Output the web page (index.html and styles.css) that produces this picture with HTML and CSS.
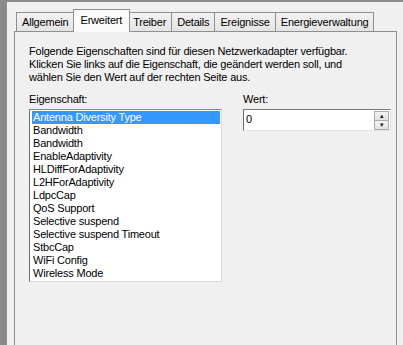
FILE: index.html
```html
<!DOCTYPE html>
<html lang="de">

<head>
    <meta charset="UTF-8">
    <meta name="viewport" content="width=device-width, initial-scale=1.0">
    <title>Eigenschaften</title>
    <link rel="stylesheet" href="styles.css">
</head>

<body>
    <div class="window">
        <div class="frameLeft"></div>
        <div class="sheet">
            <div class="tabs">
                <div class="tab">Allgemein</div>
                <div class="tab active">Erweitert</div>
                <div class="tab">Treiber</div>
                <div class="tab">Details</div>
                <div class="tab">Ereignisse</div>
                <div class="tab">Energieverwaltung</div>
            </div>
            <div class="panel">
                <p class="intro">Folgende Eigenschaften sind für diesen Netzwerkadapter verfügbar.<br>
                    Klicken Sie links auf die Eigenschaft, die geändert werden soll, und<br>
                    wählen Sie den Wert auf der rechten Seite aus.</p>
                <div class="columns">
                    <div class="propCol">
                        <div class="label">Eigenschaft:</div>
                        <ul class="list">
                            <li class="selected">Antenna Diversity Type</li>
                            <li>Bandwidth</li>
                            <li>Bandwidth</li>
                            <li>EnableAdaptivity</li>
                            <li>HLDiffForAdaptivity</li>
                            <li>L2HForAdaptivity</li>
                            <li>LdpcCap</li>
                            <li>QoS Support</li>
                            <li>Selective suspend</li>
                            <li>Selective suspend Timeout</li>
                            <li>StbcCap</li>
                            <li>WiFi Config</li>
                            <li>Wireless Mode</li>
                        </ul>
                    </div>
                    <div class="valueCol">
                        <div class="label">Wert:</div>
                        <div class="spin">
                            <div class="spinValue">0</div>
                            <div class="spinButtons">
                                <div class="spinBtn">&#9652;</div>
                                <div class="spinBtn">&#9662;</div>
                            </div>
                        </div>
                    </div>
                </div>
            </div>
        </div>
    </div>
</body>

</html>
```

FILE: styles.css
```css
body {
    margin: 0;
    font-family: "Liberation Sans", Arial, sans-serif;
    font-size: 11px;
    letter-spacing: -0.2px;
    color: #000;
    background-color: #f0f0f0;
    width: 403px;
    height: 345px;
    overflow: hidden;
}

.window {
    display: flex;
    height: 343px;
    border-top: 2px solid #8c8c8c;
}

.frameLeft {
    width: 7px;
    background: repeating-linear-gradient(90deg, #8e8e8e 0, #8e8e8e 1px, #858585 1px, #858585 2px);
}

.sheet {
    flex: 1;
    display: flex;
    flex-direction: column;
    padding: 7px 6px 0 7px;
}

.tabs {
    display: flex;
    align-items: flex-end;
    padding-left: 2px;
    height: 22px;
    position: relative;
    z-index: 1;
}

.tab {
    height: 18px;
    line-height: 18px;
    padding: 0 5px;
    border: 1px solid #8e8f8f;
    border-bottom: none;
    border-left: none;
    background: linear-gradient(#f2f2f2, #e4e4e4);
    white-space: nowrap;
}

.tab:first-child {
    border-left: 1px solid #8e8f8f;
}

.tab.active {
    height: 22px;
    line-height: 20px;
    margin: 0 -2px -1px -2px;
    padding: 0 7px;
    border-left: 1px solid #8e8f8f;
    background: #fbfbfb;
    position: relative;
    z-index: 2;
}

.panel {
    flex: 1;
    border: 1px solid #8e8f8f;
    border-bottom: none;
    background-color: #f0f0f0;
    padding: 13px 5px 0 14px;
}

.intro {
    margin: 0;
    line-height: 13px;
}

.columns {
    display: flex;
    gap: 21px;
    margin-top: 9px;
}

.label {
    line-height: 13px;
    margin-bottom: 3px;
}

.propCol {
    width: 193px;
}

.list {
    list-style: none;
    margin: 0;
    padding: 1px 1px 1px 2px;
    background: #fff;
    border: 1px solid #dadada;
    border-top-color: #828790;
    border-left-color: #6d6d6d;
}

.list li {
    height: 13px;
    line-height: 13px;
    padding-left: 1px;
}

.list li.selected {
    background-color: #3399ff;
    color: #fff;
}

.valueCol {
    width: 148px;
}

.spin {
    display: flex;
    height: 20px;
    margin-top: 2px;
    background: #fff;
    border: 1px solid #e3e3e3;
    border-top-color: #7a7a7a;
    border-left-color: #6d6d6d;
}

.spinValue {
    flex: 1;
    line-height: 18px;
    padding-left: 2px;
}

.spinButtons {
    display: flex;
    flex-direction: column;
    width: 15px;
    margin: 1px 1px 1px 0;
}

.spinBtn {
    flex: 1;
    font-size: 7px;
    line-height: 8px;
    text-align: center;
    background: linear-gradient(#f4f4f4, #e2e2e2);
    border: 1px solid #acacac;
    color: #222;
}

.spinBtn + .spinBtn {
    border-top: none;
}
```
